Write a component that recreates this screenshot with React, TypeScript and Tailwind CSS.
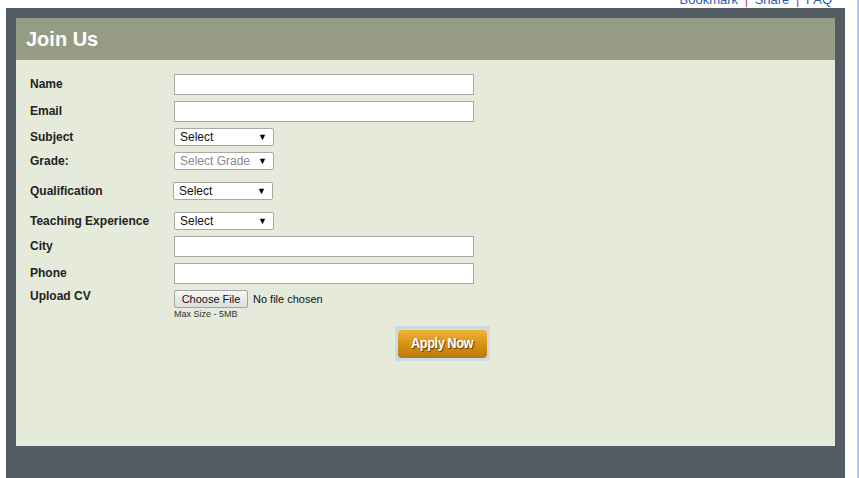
import React from "react";

const Label = ({ children, sel }: { children: React.ReactNode; sel?: boolean }) => (
  <div
    className={
      "w-[144px] shrink-0 text-[12px] leading-[14px] font-bold text-[#222] " + (sel ? "pb-0" : "pb-[2px]")
    }
  >
    {children}
  </div>
);

const TextInput = () => (
  <div className="w-[300px] h-[21px] bg-white border border-[#a9a9a9]" />
);

const Select = ({ text, muted, w = 100 }: { text: string; muted?: boolean; w?: number }) => (
  <div
    className="h-[18px] bg-white border border-[#a9a9a9] rounded-[2px] flex items-center justify-between pl-[5px] pr-[6px]"
    style={{ width: w }}
  >
    <span className={"text-[12px] leading-none " + (muted ? "text-[#8a8a8a]" : "text-[#111]")}>{text}</span>
    <span className="text-[9px] leading-none text-black">▼</span>
  </div>
);

export default function App() {
  return (
    <div
      className="w-[859px] h-[478px] overflow-hidden bg-white relative flex"
      style={{ fontFamily: '"Liberation Sans", Arial, sans-serif' }}
    >
      <div className="w-[857px] flex flex-col">
        <div className="h-[8px] overflow-hidden flex justify-end pr-[25px]">
          <div className="-mt-[8px] text-[13px] leading-[15px] text-[#2a5db0] whitespace-nowrap">
            Bookmark <span className="text-[#b04a4a] mx-[3px]">|</span> Share{" "}
            <span className="text-[#b04a4a] mx-[3px]">|</span> FAQ
          </div>
        </div>
        <div className="ml-[6px] w-[839px] h-[470px] bg-[#525c62] p-[10px] flex flex-col">
          <div className="h-[42px] bg-[#969c84] flex items-center pl-[10px]">
            <span className="text-white text-[20px] font-bold">Join Us</span>
          </div>
          <div className="h-[386px] bg-[#e5eadb] pl-[14px] pt-[14px] flex flex-col">
            <div className="flex items-center h-[21px]">
              <Label>Name</Label>
              <TextInput />
            </div>
            <div className="flex items-center h-[21px] mt-[6px]">
              <Label>Email</Label>
              <TextInput />
            </div>
            <div className="flex items-center h-[18px] mt-[6px]">
              <Label sel>Subject</Label>
              <Select text="Select" />
            </div>
            <div className="flex items-center h-[18px] mt-[6px]">
              <Label sel>Grade:</Label>
              <Select text="Select Grade" muted />
            </div>
            <div className="flex items-center h-[18px] mt-[12px]">
              <Label sel>Qualification</Label>
              <div className="-ml-[1px]">
                <Select text="Select" />
              </div>
            </div>
            <div className="flex items-center h-[18px] mt-[12px]">
              <Label sel>Teaching Experience</Label>
              <Select text="Select" />
            </div>
            <div className="flex items-center h-[21px] mt-[6px]">
              <Label>City</Label>
              <TextInput />
            </div>
            <div className="flex items-center h-[21px] mt-[6px]">
              <Label>Phone</Label>
              <TextInput />
            </div>
            <div className="flex mt-[6px]">
              <div className="-mt-[1px]">
                <Label>Upload CV</Label>
              </div>
              <div className="flex flex-col">
                <div className="flex items-center h-[18px]">
                  <div className="h-[18px] w-[74px] border border-[#a3a3a3] rounded-[2px] bg-gradient-to-b from-[#f6f6f6] to-[#dedede] flex items-center justify-center text-[11px] text-[#111]">
                    Choose File
                  </div>
                  <span className="ml-[5px] text-[11px] text-[#111]">No file chosen</span>
                </div>
                <span className="text-[9px] leading-[11px] text-[#333] mt-[1px]">Max Size - 5MB</span>
              </div>
            </div>
            <div className="mt-[6px] ml-[365px] w-[95px] h-[35px] bg-[#cbdbe2] flex items-center justify-center">
              <div className="w-[89px] h-[29px] rounded-[4px] bg-gradient-to-b from-[#f0b43a] via-[#d99414] to-[#b8780c] shadow-[inset_0_1px_0_rgba(255,240,190,0.7)] flex items-center justify-center">
                <span
                  className="text-white text-[15px] font-bold tracking-[-0.6px] scale-x-[0.86] whitespace-nowrap"
                  style={{ textShadow: "1px 1px 1px rgba(60,30,0,0.8)" }}
                >
                  Apply Now
                </span>
              </div>
            </div>
          </div>
        </div>
      </div>
      <div className="w-[2px] h-full bg-[#a8cdf0]" />
    </div>
  );
}
